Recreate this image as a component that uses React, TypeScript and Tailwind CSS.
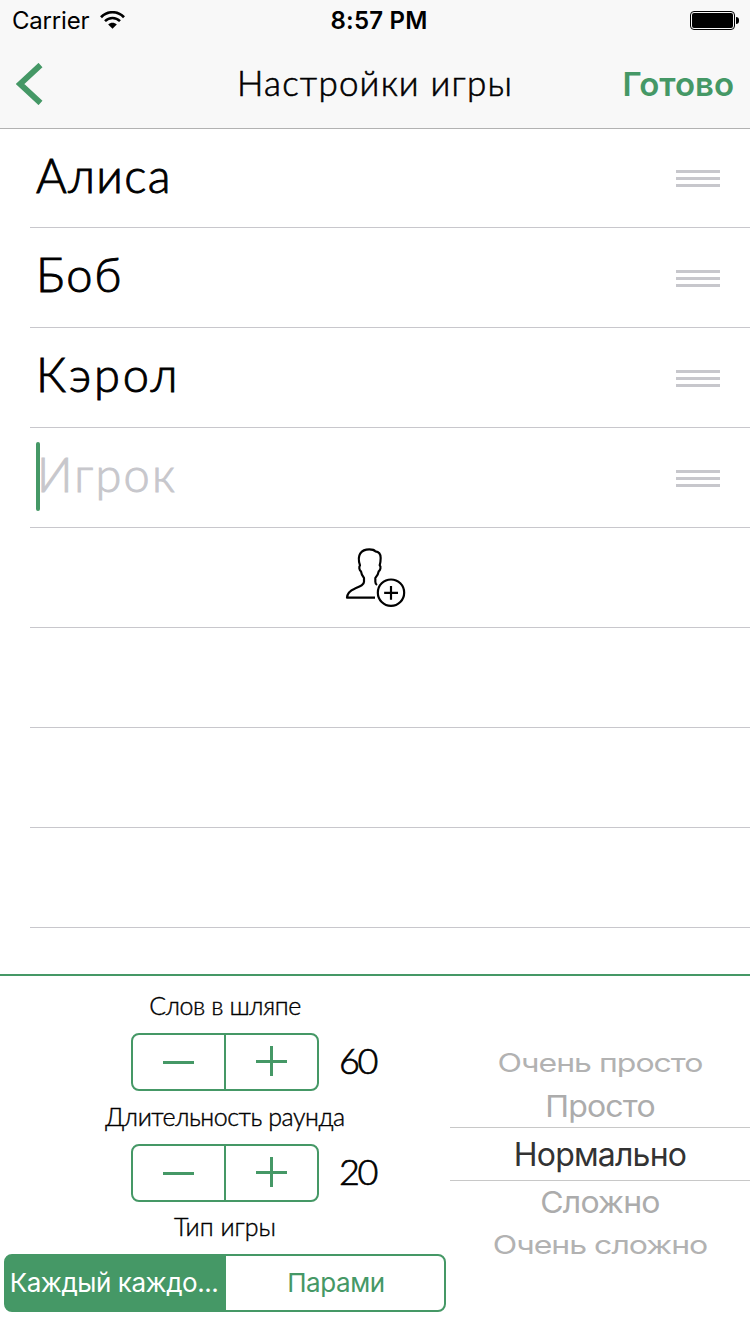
import type { ReactNode } from "react";

const heading = "font-['Lato','Noto_Sans',sans-serif] font-light";
const system = "font-['Inter','Noto_Sans',sans-serif]";

function WifiIcon() {
  return (
    <svg className="h-[18px] w-[25px] shrink-0" viewBox="0 0 25 18" fill="none" stroke="#000">
      <path d="M1 6.2C7.4-.4 17.6-.4 24 6.2" strokeWidth="2.7" />
      <path d="M5 10.2C9.2 6 15.8 6 20 10.2" strokeWidth="2.5" />
      <path d="M12.5 17.8L8.2 13.4C10.6 11.2 14.4 11.2 16.8 13.4Z" fill="#000" stroke="none" />
    </svg>
  );
}

function Battery() {
  return (
    <div className="flex items-center gap-px">
      <div className="h-[19px] w-[45px] rounded-[4px] border border-black p-px">
        <div className="h-full w-full rounded-[2px] bg-black" />
      </div>
      <div className="h-[7px] w-[3px] rounded-r-full bg-black" />
    </div>
  );
}

function AddPlayerIcon() {
  return (
    <svg className="h-[60px] w-[62px]" viewBox="45 51 186 180" fill="none" stroke="#000" strokeWidth="6.5">
      <path d="M135 203H51C52 189 59 182 74 176C91 169 102 165 102 155V144C97 138 94 132 93 124C88 121 86 111 90 106C86 94 85 79 91 70C97 61 107 58 118 58C127 58 133 60 136 64C148 65 152 72 152 84C152 94 151 99 149 106C154 111 151 121 146 124C145 132 142 138 136 144V155C136 159 137 162 141 165" strokeLinejoin="round" />
      <circle cx="183" cy="188" r="39.5" />
      <path d="M183 168V209M162.500 188.500H204" />
    </svg>
  );
}

function Grip() {
  return (
    <div className="flex w-11 flex-col gap-1">
      <div className="h-[3px] bg-[#c7c7cc]" />
      <div className="h-[3px] bg-[#c7c7cc]" />
      <div className="h-[3px] bg-[#c7c7cc]" />
    </div>
  );
}

function Row({ children }: { children?: ReactNode }) {
  return <li className="relative ml-[30px] flex h-[100px] shrink-0 items-center border-b border-[#c8c7cc] first:h-[99px]">{children}</li>;
}

function Player({ name, tracking }: { name: string; tracking: string }) {
  return (
    <Row>
      <span className={`grow pb-1.5 pl-1.5 text-[47px] leading-none [-webkit-text-stroke:0.9px_currentColor] ${heading} ${tracking}`}>{name}</span>
      <div className="pr-[30px] pt-px">
        <Grip />
      </div>
    </Row>
  );
}

function Stepper({ value }: { value: number }) {
  return (
    <div className="flex h-[58px] shrink-0 items-center pl-[131px]">
      <div className="flex h-[58px] w-[188px] rounded-lg border-2 border-[#459866]">
        <button className="flex w-[93px] items-center justify-center border-r-2 border-[#459866]" aria-label="−">
          <svg className="h-8 w-8" viewBox="0 0 32 32" fill="#459866">
            <path d="M0 15h31v3H0z" />
          </svg>
        </button>
        <button className="flex grow items-center justify-center" aria-label="+">
          <svg className="h-8 w-8" viewBox="0 0 32 32" fill="#459866">
            <path d="M0 14h31v3H0zM14 -1h3v31h-3z" />
          </svg>
        </button>
      </div>
      <span className={`ml-[20px] pb-1 text-[36px] leading-none tracking-[-2.4px] [-webkit-text-stroke:0.7px_currentColor] ${heading}`}>{value}</span>
    </div>
  );
}

export default function App() {
  return (
    <main className="flex h-[1334px] w-[750px] flex-col overflow-hidden bg-white text-black">
      <header className="flex h-[129px] shrink-0 flex-col border-b border-[#b2b2b2] bg-[#f8f8f8]">
        <div className={`grid h-10 grid-cols-3 items-center pl-3 pr-[11px] text-[24px] leading-none ${system}`}>
          <div className="flex items-center gap-[11px]">
            <span className="pt-0.5 tracking-[-0.2px]">Carrier</span>
            <WifiIcon />
          </div>
          <span className="pl-[7px] pt-0.5 text-center font-semibold tracking-[0.2px]">8:57 PM</span>
          <div className="flex justify-end">
            <Battery />
          </div>
        </div>
        <div className="grid h-[88px] grid-cols-[180px_1fr_180px] items-center">
          <button className="pl-4" aria-label="‹">
            <svg className="h-[42px] w-[27px]" viewBox="0 0 27 42" fill="none" stroke="#459866" strokeWidth="5.800">
              <path d="M24.500 2L4 21L24.500 40" />
            </svg>
          </button>
          <h1 className={`pb-1 text-center text-[35px] leading-none tracking-[1.2px] [-webkit-text-stroke:0.6px_currentColor] ${heading}`}>Настройки игры</h1>
          <button className={`pr-4 pt-px text-right text-[33px] font-semibold leading-none text-[#459866] ${system}`}>Готово</button>
        </div>
      </header>

      <ul className="flex h-[845px] shrink-0 flex-col">
        <Player name="Алиса" tracking="tracking-[1.3px]" />
        <Player name="Боб" tracking="tracking-[1.8px]" />
        <Player name="Кэрол" tracking="tracking-[2.800px]" />
        <Row>
          <span className={`grow pb-1.5 pl-[7px] text-[47px] leading-none tracking-[2.2px] text-[#c7c7cc] [-webkit-text-stroke:0.9px_currentColor] ${heading}`}>Игрок</span>
          <div className="absolute left-1.5 top-[14px] h-[69px] w-1 rounded-full bg-[#459866]" />
          <div className="pr-[30px] pt-px">
            <Grip />
          </div>
        </Row>
        <Row>
          <div className="pb-0.5 pl-[315px]">
            <AddPlayerIcon />
          </div>
        </Row>
        <Row />
        <Row />
        <Row />
      </ul>

      <section className="flex grow border-t-2 border-[#459866]">
        <div className="flex w-[450px] flex-col">
          <h2 className={`flex h-[57px] items-center justify-center pt-0.5 text-[25px] leading-none tracking-[-0.4px] [-webkit-text-stroke:0.4px_currentColor] ${heading}`}>Слов в шляпе</h2>
          <Stepper value={60} />
          <h2 className={`flex h-[53px] items-center justify-center pb-0.5 text-[25px] leading-none tracking-[-0.45px] [-webkit-text-stroke:0.4px_currentColor] ${heading}`}>Длительность раунда</h2>
          <Stepper value={20} />
          <h2 className={`flex h-[52px] items-center justify-center pb-1 text-[25px] leading-none [-webkit-text-stroke:0.4px_currentColor] ${heading}`}>Тип игры</h2>
          <div className={`ml-1 flex h-[58px] w-[442px] overflow-hidden rounded-lg border-2 border-[#459866] bg-[linear-gradient(to_right,#459866_220px,#fff_220px)] text-[26px] leading-none ${system}`}>
            <button className="w-[220px] whitespace-nowrap pr-1 tracking-[-0.45px] text-white">Каждый каждо...</button>
            <button className="grow pl-0.5 tracking-[-0.4px] text-[#459866]">Парами</button>
          </div>
        </div>
        <div className={`flex w-[300px] flex-col whitespace-nowrap pt-[66px] text-center text-[32px] leading-none tracking-[-0.8px] text-[#acacac] ${system}`}>
          <div className="flex h-[42px] items-center justify-center text-[#b2b2b2]">
            <span className="scale-y-[0.8] tracking-[-1px]">Очень просто</span>
          </div>
          <div className="flex h-[43px] items-center justify-center pt-0.5">
            <span className="scale-y-[0.93]">Просто</span>
          </div>
          <div className="flex h-[54px] items-center justify-center border-y border-[#c8c8c8] pt-0.5 text-[#333333]">Нормально</div>
          <div className="flex h-[42px] items-center justify-center pt-0.5">
            <span className="scale-y-[0.93]">Сложно</span>
          </div>
          <div className="flex h-[43px] items-center justify-center pt-px text-[#b2b2b2]">
            <span className="scale-y-[0.8] tracking-[-1px]">Очень сложно</span>
          </div>
        </div>
      </section>
    </main>
  );
}
